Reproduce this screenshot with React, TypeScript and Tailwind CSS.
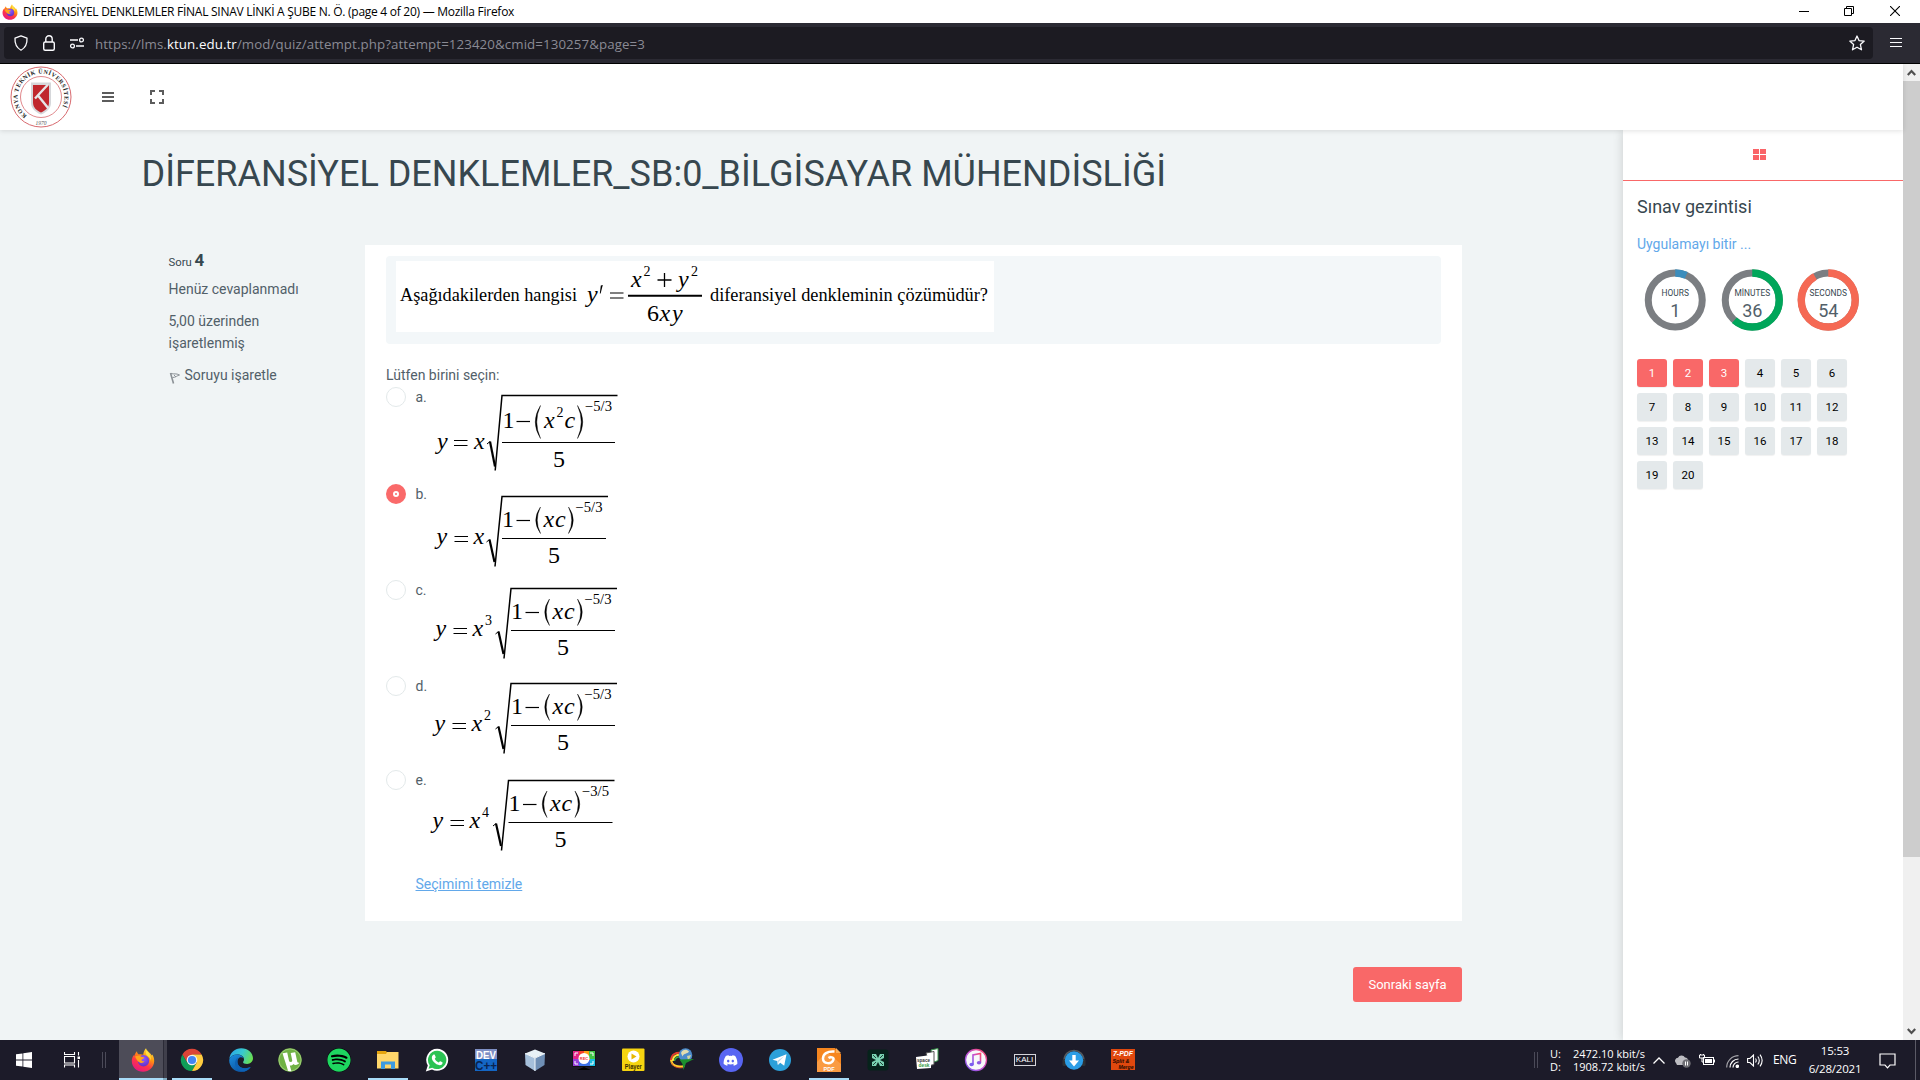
import React from "react";
import { FaSpotify, FaDiscord } from "react-icons/fa";

const SERIF = "'Liberation Serif', serif";

type GlyphProps = { x: number; y: number; size?: number; italic?: boolean; w?: number; children: React.ReactNode };

function G({ x, y, size = 24, italic, w, children }: GlyphProps) {
  return (
    <text
      x={x}
      y={y}
      fontFamily={SERIF}
      fontSize={size}
      fontStyle={italic ? "italic" : "normal"}
      fill="#000"
      textLength={w}
      lengthAdjust="spacingAndGlyphs"
    >
      {children}
    </text>
  );
}

function FirefoxIcon({ className }: { className: string }) {
  return (
    <svg viewBox="0 0 24 24" className={className}>
      <defs>
        <linearGradient id="ffBody" x1="0.8" y1="0" x2="0.25" y2="1">
          <stop offset="0" stopColor="#fff44f" />
          <stop offset="0.35" stopColor="#ff980e" />
          <stop offset="0.65" stopColor="#ff3647" />
          <stop offset="1" stopColor="#e31587" />
        </linearGradient>
        <radialGradient id="ffGlobe" cx="0.5" cy="0.3" r="0.8">
          <stop offset="0" stopColor="#9059ff" />
          <stop offset="1" stopColor="#5b2bbd" />
        </radialGradient>
      </defs>
      <path d="M15 0.3c.6 2.2 2.200 3 4 5 .7.6 1.300 1.300 1.700 2.200l.5-.9c1.500 2 2.100 4.500 2 6.900-.3 5.800-5.200 10.200-11.200 10.200C5.800 23.700.8 19.200.8 13c0-2.500.8-4.500 2-6l.2 1.300C4 6.300 4.500 4.500 6 3.300c0 1.700.8 2.500 1.800 3.100 1.500-.4 3.200-.2 4.400.4C12.300 4.500 13.600 1.800 15 .3z" fill="url(#ffBody)" />
      <circle cx="12.500" cy="12.800" r="5.700" fill="url(#ffGlobe)" />
      <path d="M4 8.500c2-1.200 5-1 6.800.4l2.500.3c-.2 1.400-2 1.500-2.700 2.600-.3 1.300 1.300 1.700 2.900 1.500-.9 1.400-2.700 1.900-4.300 1.400C6.700 13.900 5.500 11.400 4 8.500z" fill="#ffa31a" />
      <path d="M15.500 2.500c2.500 2.500 5 6 4.400 10.500-.3-2.400-1.500-4-3.400-5.100-1.700-1.300-2.100-3.200-1-5.400z" fill="#ffe847" opacity=".85" />
    </svg>
  );
}

function Seal() {
  return (
    <svg viewBox="-31 -31 62 62" className="h-[62px] w-[62px]">
      <defs>
        <path id="sealRing" d="M-14 18.700A23.400 23.400 0 1 1 14.500 18.300" />
      </defs>
      <circle r="30" fill="#fff" stroke="#d8696e" strokeWidth="1" />
      <circle r="20.500" fill="none" stroke="#d8696e" strokeWidth=".8" />
      <text fontFamily={SERIF} fontSize="6" fontWeight="bold" fill="#222" letterSpacing=".55">
        <textPath href="#sealRing">KONYA TEKNİK ÜNİVERSİTESİ</textPath>
      </text>
      <path d="M-10-14.500H10V6C10 11 5.500 15.500 0 17.500-5.500 15.500-10 11-10 6z" fill="#d6d7da" />
      <path d="M-8-12H8V5.500C8 10.500 4.500 13.500 0 15.500-4.500 13.500-8 10.500-8 5.500z" fill="#c0272d" />
      <path d="M7-12.500L-6 1.500M-3-1.500L7.500 11.500" stroke="#e6e6e8" strokeWidth="2.400" fill="none" />
      <text x="0" y="27.500" fontFamily={SERIF} fontSize="5.500" fontStyle="italic" textAnchor="middle" fill="#555">1970</text>
    </svg>
  );
}

function TitleBar() {
  return (
    <div className="flex h-[23px] shrink-0 items-center bg-white pl-[2px]">
      <FirefoxIcon className="h-4 w-4" />
      <span className="ml-[5px] whitespace-nowrap font-['Open_Sans',sans-serif] text-[12px] tracking-[-0.27px] text-black">
        DİFERANSİYEL DENKLEMLER FİNAL SINAV LİNKİ A ŞUBE N. Ö. (page 4 of 20) — Mozilla Firefox
      </span>
      <div className="ml-auto flex items-center pr-[20px]">
        <svg className="h-[11px] w-[10px]" viewBox="0 0 10 11"><path d="M0 5.500h10" stroke="#000" /></svg>
        <svg className="ml-[35px] mt-[-2px] h-[10px] w-[10px]" viewBox="0 0 10 10" fill="none" stroke="#000">
          <path d="M.5 2.500h7v7h-7zM2.500 2.500v-2h7v7h-2" />
        </svg>
        <svg className="ml-[36px] mt-[-2px] h-[10px] w-[10px]" viewBox="0 0 10 10"><path d="M0 0l10 10M10 0L0 10" stroke="#000" strokeWidth="1.100" /></svg>
      </div>
    </div>
  );
}

function UrlBar() {
  return (
    <div className="flex h-[41px] shrink-0 items-center border-b border-black bg-[#2b2a33] pl-1">
      <div className="flex h-8 w-[1869px] items-center rounded bg-[#1c1b22] pl-[9px]">
        <svg className="h-4 w-4" viewBox="0 0 16 16" fill="none" stroke="#fbfbfe" strokeWidth="1.300">
          <path d="M8 .8l6 2.300c.3 5-1.500 9.600-6 12.100C3.500 12.700 1.700 8.100 2 3.100z" strokeLinejoin="round" />
        </svg>
        <svg className="ml-3 h-4 w-4" viewBox="0 0 16 16" fill="none" stroke="#fbfbfe" strokeWidth="1.400">
          <rect x="2.700" y="7" width="10.600" height="8.200" rx="1.500" /><path d="M4.800 7V4a3.200 3.200 0 0 1 6.400 0v3" />
        </svg>
        <svg className="ml-3 h-4 w-4" viewBox="0 0 16 16" fill="none" stroke="#fbfbfe" strokeWidth="1.300">
          <path d="M1 5h8M7 11h8" /><circle cx="12.500" cy="5" r="1.900" /><circle cx="3.500" cy="11" r="1.900" />
        </svg>
        <span className="ml-[10px] mt-[3px] whitespace-nowrap font-['Open_Sans',sans-serif] text-[13.300px] tracking-[0.09px] text-[#8a8a94]">
          https://lms.<span className="text-[#fbfbfe]">ktun.edu.tr</span>/mod/quiz/attempt.php?attempt=123420&amp;cmid=130257&amp;page=3
        </span>
        <svg className="ml-auto mr-2 h-4 w-4" viewBox="0 0 16 16" fill="none" stroke="#fbfbfe" strokeWidth="1.300" strokeLinejoin="round">
          <path d="M8 1l2 4.600 5.200.5-3.800 3.500 1.100 5.200L8 12.200l-4.500 2.600 1.100-5.200L.8 6.100 6 5.600z" />
        </svg>
      </div>
      <svg className="ml-[17px] h-[12px] w-[12px]" viewBox="0 0 12 12"><path d="M0 1.500h12M0 5.500h12M0 9.500h12" stroke="#fbfbfe" /></svg>
    </div>
  );
}

function PageHeader() {
  return (
    <header className="relative z-10 flex h-[66px] shrink-0 items-center bg-white pl-[10px] shadow-[0_1px_5px_rgba(0,0,0,0.12)]">
      <Seal />
      <svg className="ml-[30px] h-[10px] w-[12px]" viewBox="0 0 12 10"><path d="M0 1h12M0 5h12M0 9h12" stroke="#5c5c5c" strokeWidth="2" /></svg>
      <svg className="ml-[36px] h-[14px] w-[14px]" viewBox="0 0 14 14" fill="none" stroke="#5c5c5c" strokeWidth="2">
        <path d="M1 5V1h4M9 1h4v4M13 9v4H9M5 13H1V9" />
      </svg>
    </header>
  );
}

function QuestionFormula() {
  return (
    <svg viewBox="396 261 598 71" className="h-[71px] w-[598px] bg-white">
      <G x={400} y={301} size={18.5} w={177}>Aşağıdakilerden hangisi</G>
      <G x={587} y={301.500} italic>y</G>
      <path d="M600.800 285.500l2-.6-2.200 8.500h-.8z" fill="#000" />
      <path d="M610 293h13.500M610 298h13.500" stroke="#000" strokeWidth="1.200" />
      <G x={631} y={286.500} italic>x</G>
      <G x={643.5} y={275.500} size={14}>2</G>
      <path d="M657.500 280h14M664.500 273v14" stroke="#000" strokeWidth="1.300" />
      <G x={678} y={286.500} italic>y</G>
      <G x={691} y={275.500} size={14}>2</G>
      <path d="M628 295.800h74" stroke="#000" strokeWidth="2" />
      <G x={647} y={321}>6</G>
      <G x={659.5} y={321} italic>x</G>
      <G x={672} y={321} italic>y</G>
      <G x={710} y={301} size={18.5} w={278}>diferansiyel denkleminin çözümüdür?</G>
    </svg>
  );
}

type Answer = {
  letter: string;
  row: string;
  dx: number;
  dy: number;
  yx: number;
  power?: string;
  exp: string;
  checked?: boolean;
};

const ANSWERS: Answer[] = [
  { letter: "b.", row: "h-[96px]", dx: 0, dy: 0, yx: 436.500, exp: "−5/3", checked: true },
  { letter: "c.", row: "h-[96px]", dx: 9, dy: -4, yx: 435.500, power: "3", exp: "−5/3" },
  { letter: "d.", row: "h-[94px]", dx: 9, dy: -5, yx: 434.500, power: "2", exp: "−5/3" },
  { letter: "e.", row: "h-[92px]", dx: 6.500, dy: -2, yx: 432.500, power: "4", exp: "−3/5" },
];

function FormulaA() {
  return (
    <svg viewBox="430 387 200 90" className="h-[90px] w-[200px]">
      <G x={437} y={448.500} italic>y</G>
      <path d="M454 440.500h13.500M454 445.500h13.500" stroke="#000" strokeWidth="1.200" />
      <G x={474} y={448.500} italic>x</G>
      <path d="M487 444l3-2.500" stroke="#000" fill="none" />
      <path d="M490 441.500l5 25" stroke="#000" strokeWidth="2.200" fill="none" />
      <path d="M495.200 470.500L502 395.500H617.500" stroke="#000" strokeWidth="1.500" fill="none" />
      <path d="M502 442.500h113" stroke="#000" strokeWidth="1.200" />
      <G x={502.500} y={428}>1</G>
      <path d="M516.500 421.500h13.500" stroke="#000" strokeWidth="1.200" />
      <path d="M540.500 405.500q-10.500 16.500 0 33q-7.500-16.500 0-33z" fill="#000" stroke="#000" strokeWidth=".4" />
      <G x={544} y={428} italic>x</G>
      <G x={556.500} y={417} size={14}>2</G>
      <G x={564.500} y={428} italic>c</G>
      <path d="M577.500 405.500q10.500 16.500 0 33q7.500-16.500 0-33z" fill="#000" stroke="#000" strokeWidth=".4" />
      <G x={585} y={411} size={14} w={27}>−5/3</G>
      <G x={553} y={467}>5</G>
    </svg>
  );
}

function Formula({ dx, dy, yx, power, exp }: Answer) {
  return (
    <svg viewBox="430 484 200 90" className="h-[90px] w-[200px]">
      <g transform={`translate(0 ${dy})`}>
        <G x={yx} y={544} italic>y</G>
        <path d={`M${yx + 18} 536.500h13.500M${yx + 18} 541.500h13.500`} stroke="#000" strokeWidth="1.200" />
        <G x={yx + 37} y={544} italic>x</G>
        {power && <G x={yx + 49.500} y={533} size={14}>{power}</G>}
      </g>
      <g transform={`translate(${dx} ${dy})`}>
        <path d="M486.500 542l3-2.500" stroke="#000" fill="none" />
        <path d="M489.500 539.500l5 22.500" stroke="#000" strokeWidth="2.200" fill="none" />
        <path d="M495 566.500L502 496.500H608" stroke="#000" strokeWidth="1.500" fill="none" />
        <path d="M502 538.500h104" stroke="#000" strokeWidth="1.200" />
        <G x={502} y={526.500}>1</G>
        <path d="M516.500 520.500h13.500" stroke="#000" strokeWidth="1.200" />
        <path d="M540.500 507q-9.500 13.200 0 26.500q-6.500-13.300 0-26.500z" fill="#000" stroke="#000" strokeWidth=".4" />
        <G x={543.500} y={526.500} italic>x</G>
        <G x={555} y={526.500} italic>c</G>
        <path d="M568.500 507q9.500 13.200 0 26.500q6.500-13.300 0-26.500z" fill="#000" stroke="#000" strokeWidth=".4" />
        <G x={575.500} y={512} size={14} w={27}>{exp}</G>
        <G x={548} y={563}>5</G>
      </g>
    </svg>
  );
}

function Radio({ checked }: { checked?: boolean }) {
  return checked ? (
    <span className="flex h-5 w-5 items-center justify-center rounded-full bg-[#fa6a6a]">
      <span className="h-[6px] w-[6px] rounded-full border-2 border-white bg-[#fa6a6a]" />
    </span>
  ) : (
    <span className="h-5 w-5 rounded-full border border-[#e3e9ea] bg-white" />
  );
}

function AnswerRow({ letter, row, checked, children }: { letter: string; row: string; checked?: boolean; children: React.ReactNode }) {
  return (
    <div className={`flex items-start ${row}`}>
      <Radio checked={checked} />
      <span className="ml-[9.500px] w-[14.500px] text-[14px] leading-5">{letter}</span>
      {children}
    </div>
  );
}

function Dial({ label, value, color, fraction }: { label: string; value: string; color: string; fraction: number }) {
  const len = 2 * Math.PI * 27;
  return (
    <svg viewBox="-38.250 -31 76.500 62" className="h-[62px] w-[76.500px]">
      <circle r="27" fill="none" stroke="#7b7e82" strokeWidth="7" />
      <circle r="27" fill="none" stroke={color} strokeWidth="7.400" strokeDasharray={`${len * fraction} ${len}`} transform="rotate(-90)" />
      <text x="0" y="-4" textAnchor="middle" fontFamily="Roboto, sans-serif" fontSize="8.400" fill="#37474f">{label}</text>
      <text x="0" y="17" textAnchor="middle" fontFamily="Roboto, sans-serif" fontSize="18" fill="#526069">{value}</text>
    </svg>
  );
}

function QuizSidebar() {
  return (
    <aside className="w-[280px] shrink-0 bg-white shadow-[0_0_10px_rgba(0,0,0,0.16)]">
      <div className="flex h-[51px] items-center justify-center border-b border-[#f96868] pb-[1px]">
        <svg className="mr-[7px] mb-[1px] h-[11px] w-[13px]" viewBox="0 0 13 11" fill="#fa6468">
          <rect width="6" height="5" /><rect x="7" width="6" height="5" /><rect y="6" width="6" height="5" /><rect x="7" y="6" width="6" height="5" />
        </svg>
      </div>
      <div className="px-[14px]">
        <h2 className="mt-[14px] text-[18px] leading-6 text-[#37474f]">Sınav gezintisi</h2>
        <p className="mt-[14px] text-[14px] leading-[22px] text-[#62a8ea]">Uygulamayı bitir ...</p>
        <div className="mt-[14px] flex">
          <Dial label="HOURS" value="1" color="#3c8dbc" fraction={0.066} />
          <Dial label="MİNUTES" value="36" color="#00a65a" fraction={0.613} />
          <Dial label="SECONDS" value="54" color="#f56954" fraction={0.915} />
        </div>
        <div className="mt-[28px] grid w-[210px] grid-cols-6 gap-[6px]">
          {Array.from({ length: 20 }, (_, i) => (
            <div
              key={i}
              className={`flex h-7 items-center justify-center rounded-[3px] pt-px text-[11.500px] shadow-[0_1px_1px_rgba(0,0,0,0.06)] ${i < 3 ? "bg-[#f96868] text-white" : "bg-[#e4e9eb] text-black"}`}
            >
              {i + 1}
            </div>
          ))}
        </div>
      </div>
    </aside>
  );
}

function Scrollbar() {
  return (
    <div className="flex w-[17px] shrink-0 flex-col bg-[#f0f0f0]">
      <div className="flex h-[17px] items-center justify-center">
        <svg className="h-[7px] w-[9px]" viewBox="0 0 9 7"><path d="M.8 6L4.500 2l3.700 4" fill="none" stroke="#505050" strokeWidth="2.200" /></svg>
      </div>
      <div className="h-[776px] bg-[#cdcdcd]" />
      <div className="mt-auto flex h-[17px] items-center justify-center">
        <svg className="h-[7px] w-[9px]" viewBox="0 0 9 7"><path d="M.8 1L4.500 5l3.700-4" fill="none" stroke="#505050" strokeWidth="2.200" /></svg>
      </div>
    </div>
  );
}

function IconArt({ name }: { name: string }) {
  const box = "h-6 w-6";
  switch (name) {
    case "firefox":
      return <FirefoxIcon className={box} />;
    case "chrome":
      return (
        <svg viewBox="-12 -12 24 24" className={box}>
          <path d="M-9.600-5.600A11.100 11.100 0 0 1 9.600-5.600L0-5.200-5 2.600z" fill="#db4437" />
          <path d="M-9.600-5.600A11.100 11.100 0 0 0 0 11.100L4.800 2.500-4.800 2.600z" fill="#0f9d58" />
          <path d="M9.600-5.600A11.100 11.100 0 0 1 0 11.100L4.800 2.500 0-5.400z" fill="#ffcd40" />
          <circle r="5.300" fill="#f4f4f4" /><circle r="4.100" fill="#4285f4" />
        </svg>
      );
    case "edge":
      return (
        <svg viewBox="0 0 24 24" className={box}>
          <defs>
            <linearGradient id="edTop" x1="0" y1=".3" x2="1" y2=".6"><stop offset="0" stopColor="#2aa8e8" /><stop offset=".5" stopColor="#38c8d0" /><stop offset="1" stopColor="#6be04c" /></linearGradient>
            <linearGradient id="edLow" x1="0" y1="0" x2=".7" y2="1"><stop offset="0" stopColor="#1b8fe0" /><stop offset="1" stopColor="#0b4f9c" /></linearGradient>
          </defs>
          <path d="M.3 11C1 4.500 6 .2 12.200.2 19 .2 24 5 24 10.300c0 3.300-2.700 5.600-5.800 5.600-2.700 0-4.400-1-4.100-2 .6-.9.9-1.500.9-2.600C15 8.500 11.800 6.500 8.300 6.500 4.500 6.500 1.500 8.500.3 11z" fill="url(#edTop)" />
          <path d="M.2 12C.8 8.600 4.400 6.400 8.200 6.400c3.200 0 6 1.700 6.600 4.200-1-1-2.100-1.400-3.300-1.300-2.400.3-3.700 3.700-2.700 6.600 1.300 4.100 7.200 5.700 12.900 3.100-2.100 3.200-5.600 5-9.700 5C5.500 24 0 18.500.2 12z" fill="url(#edLow)" />
          <path d="M9 9.700c-3.300 2-4 6.700-1.500 10 2 2.800 5.300 4 8 3.800 2.500-.6 4.700-2.100 6.200-4.400-5.500 2.400-11.600.9-12.900-3.200-.8-2.300-.4-4.700.2-6.200z" fill="#0d62b5" />
        </svg>
      );
    case "utorrent":
      return (
        <svg viewBox="0 0 24 24" className={box}>
          <circle cx="12" cy="12" r="11.700" fill="#70b244" /><circle cx="12" cy="12" r="11" fill="none" stroke="#9ccb76" strokeWidth="1" />
          <path d="M4.500 5.200L9.200 4.500l1.800 8.300c.4 1.900 3.600 1.400 3.200-.6L12.700 5l4.500-.7 2 9.300c.2 1 1 1.400 2.200 1.100-.8 1.800-4.400 3.300-6 1.300-.9 1.200-2.300 1.700-3.600 1.500l1.600 5.800-3.300-.2z" fill="#fff" />
        </svg>
      );
    case "spotify":
      return <span className="flex h-6 w-6 rounded-full bg-black"><FaSpotify className="h-6 w-6 text-[#1ed760]" /></span>;
    case "explorer":
      return (
        <svg viewBox="0 0 24 24" className={box}>
          <path d="M1 3h9l1.500 2H22v3H1z" fill="#e5a50f" /><path d="M1 6h9l1-2h11.500v16.500H1z" fill="#ffd76b" />
          <path d="M5 21v-7.500h14V21h-4v-4.500H9V21z" fill="#3d9be0" />
        </svg>
      );
    case "whatsapp":
      return (
        <svg viewBox="0 0 24 24" className={box}>
          <path d="M12.200.8A11 11 0 1 1 7 21.500L.8 23.400l2-6A11 11 0 0 1 12.200.8z" fill="#fff" />
          <path d="M12.200 2.700A9.200 9.200 0 1 1 7.300 19.700l-3.800 1.100 1.200-3.600A9.200 9.200 0 0 1 12.200 2.700z" fill="#2bc353" />
          <path d="M8.300 6.800c.5-.4 1.200-.4 1.500.2l.9 2c.2.600-.7 1.300-.9 1.700.8 1.700 2.100 2.900 3.900 3.700.5-.3 1-1.500 1.600-1.200l2.100 1.100c.4.400 0 1.700-.5 2.200-2.400 2-6.300-.4-8.100-2.400C6.700 11.700 6 8.500 8.300 6.800z" fill="#fff" />
        </svg>
      );
    case "dev":
      return (
        <svg viewBox="0 0 24 24" className={box}>
          <rect x="1" y="1" width="22" height="11" fill="#7e8fc4" /><rect x="1" y="11" width="22" height="12" fill="#1466c4" />
          <text x="12" y="11" textAnchor="middle" fontSize="10" fontWeight="bold" fontFamily="Liberation Sans, sans-serif" fill="#fff" textLength="20" lengthAdjust="spacingAndGlyphs">DEV</text>
          <text x="12" y="22" textAnchor="middle" fontSize="12" fontWeight="bold" fontFamily="Liberation Sans, sans-serif" fill="#0a2450" textLength="22" lengthAdjust="spacingAndGlyphs">C++</text>
        </svg>
      );
    case "cube":
      return (
        <svg viewBox="0 0 24 24" className={box}>
          <path d="M12 1.500l10 4-10 4.500-10-4.500z" fill="#e8f1f6" /><path d="M2 5.500L12 10v13L2.500 17z" fill="#a6c0db" /><path d="M22 5.500L12 10v13l9.500-6z" fill="#6f8fb5" />
          <path d="M12 10v13M2 5.500L12 10l10-4.500" stroke="#f3f8fb" fill="none" />
        </svg>
      );
    case "rec":
      return (
        <svg viewBox="0 0 24 24" className={box}>
          <rect x=".5" y="2" width="23" height="17" fill="#111" /><path d="M5 22l7-3 7 3z" fill="#000" />
          <rect x="1" y="3" width="6" height="8" fill="#e02487" /><rect x="1" y="11" width="6" height="7" fill="#9640d8" /><rect x="7" y="3" width="5" height="15" fill="#f4402d" /><rect x="12" y="3" width="6" height="15" fill="#ff9d16" /><rect x="17" y="3" width="6" height="8" fill="#41c447" /><rect x="7" y="12" width="11" height="6" fill="#3e72e6" /><rect x="18" y="11" width="5" height="7" fill="#19bde0" />
          <path d="M3 8V5h3M18 5h3v3M21 13v3h-3M6 16H3v-3" stroke="#fff" fill="none" />
          <circle cx="12" cy="10.500" r="5.500" fill="#fff" />
          <text x="12" y="12" textAnchor="middle" fontSize="4" fontWeight="bold" fontFamily="Liberation Sans, sans-serif" fill="#f03030">REC</text>
        </svg>
      );
    case "player":
      return (
        <svg viewBox="0 0 24 24" className={box}>
          <rect x="1" y=".5" width="22.500" height="22.500" rx="1" fill="#f6d410" /><circle cx="12.500" cy="8.500" r="6" fill="#fff" /><path d="M10.500 5.500l5 3-5 3z" fill="#e8b800" />
          <text x="12.300" y="21" textAnchor="middle" fontSize="6.500" fontWeight="bold" fontFamily="Liberation Sans, sans-serif" fill="#3a2d00" textLength="17" lengthAdjust="spacingAndGlyphs">Player</text>
        </svg>
      );
    case "idm":
      return (
        <svg viewBox="0 0 24 24" className={box}>
          <path d="M1 13C1 6 6 4 12 5" stroke="#e23b2c" strokeWidth="2" fill="none" /><path d="M2.800 13C2.800 8 7 6 12 7" stroke="#ffe23a" strokeWidth="2" fill="none" /><path d="M4.500 13C4.500 10 8 8 12 9" stroke="#35a845" strokeWidth="1.500" fill="none" />
          <path d="M1.300 12c0 6 7 7.500 13 6" stroke="#ffcf2a" strokeWidth="2.200" fill="none" /><path d="M1.500 14.500c1 4.500 7 6 12 5" stroke="#e25b2c" strokeWidth="1" fill="none" />
          <circle cx="15.500" cy="7" r="6.800" fill="#4d8ccc" /><path d="M11 5c1.500-4 6-4 8-1.500-2 3-5 1-6.500 5z" fill="#e3ddb0" /><path d="M17 8l4-1-1 3-2 2z" fill="#cfd3a4" />
          <path d="M9.500 11.500L24 11l-8 4-2.500 7-1-6z" fill="#1c8f2d" />
        </svg>
      );
    case "discord":
      return <span className="flex h-6 w-6 items-center justify-center rounded-full bg-[#5865f2]"><FaDiscord className="h-[15px] w-[15px] text-white" /></span>;
    case "telegram":
      return (
        <svg viewBox="0 0 24 24" className={box}>
          <circle cx="12" cy="12" r="11" fill="#2ba0da" />
          <path d="M4.500 11.800L18.500 6.300l-2.300 11.500-4-3-2.300 2.200-.7-4z" fill="#fff" /><path d="M9.200 13l7-5-5.500 6-.8 3z" fill="#b9d8ea" />
        </svg>
      );
    case "foxit":
      return (
        <svg viewBox="0 0 24 24" className={box}>
          <path d="M0 0h18l6 6v18H0z" fill="#f6861f" /><path d="M0 14L10 4l14 12v8H0z" fill="#fa9b42" /><path d="M19 0v5h5z" fill="#fbb05d" />
          <path d="M17.500 3.500C10 3 6 6 6 10.500c0 5.500 8.500 6.500 10.500 1 .5-2-3-3-5-1.500" stroke="#fff" strokeWidth="2.400" fill="none" />
          <text x="12" y="23" textAnchor="middle" fontSize="5.500" fontWeight="bold" fontFamily="Liberation Sans, sans-serif" fill="#fff">PDF</text>
        </svg>
      );
    case "green":
      return (
        <svg viewBox="0 0 24 24" className={box}>
          <rect x="1.500" y="1.500" width="21" height="21" rx="3" fill="#06231b" />
          <path d="M6 6h4l2 4 2-4h4v4l-4 2 4 2v4h-4l-2-4-2 4H6v-4l4-2-4-2z" fill="#79d3b1" /><path d="M7 7l3 3M17 7l-3 3M7 17l3-3M17 17l-3-3" stroke="#06231b" strokeWidth=".8" />
        </svg>
      );
    case "spacedesk":
      return (
        <svg viewBox="0 0 24 24" className={box}>
          <path d="M16 2l7-1.500v12L19 14z" fill="#fff" stroke="#3f9b50" /><path d="M11 5l8-1.500v13l-4 1z" fill="#fff" stroke="#555" />
          <path d="M1 9l15-2v13L2 21z" fill="#fff" />
          <text x="8.500" y="14" textAnchor="middle" fontSize="5.500" fontWeight="bold" fontFamily="Liberation Sans, sans-serif" fill="#333" textLength="13" lengthAdjust="spacingAndGlyphs">space</text>
          <text x="9" y="19" textAnchor="middle" fontSize="5.500" fontWeight="bold" fontFamily="Liberation Sans, sans-serif" fill="#2f9b45" textLength="11" lengthAdjust="spacingAndGlyphs">desk</text>
        </svg>
      );
    case "itunes":
      return (
        <svg viewBox="0 0 24 24" className={box}>
          <defs><linearGradient id="itn" x1="0" y1="1" x2="1" y2="0"><stop offset="0" stopColor="#7a5cf0" /><stop offset=".5" stopColor="#c84fd0" /><stop offset="1" stopColor="#fb4a68" /></linearGradient></defs>
          <circle cx="12" cy="12" r="10.500" fill="#f8f8fa" stroke="url(#itn)" strokeWidth="1.300" />
          <path d="M9 16.500V7l7.500-1.500v9" stroke="url(#itn)" strokeWidth="1.600" fill="none" /><ellipse cx="7.600" cy="16.500" rx="2.200" ry="1.800" fill="#7c5df0" /><ellipse cx="15" cy="14.800" rx="2.200" ry="1.800" fill="#8e58e0" />
        </svg>
      );
    case "kali":
      return <span className="flex h-[12px] w-[22px] items-center justify-center border border-[#d4d4da] font-['Liberation_Sans',sans-serif] text-[8px] leading-none text-white">KALI</span>;
    case "download":
      return (
        <svg viewBox="0 0 24 24" className={box}>
          <path d="M2 13C2-1 22-1 22 13" stroke="#555a5e" strokeWidth="1.600" fill="none" /><rect x=".5" y="11" width="4" height="7" rx="1.500" fill="#2e3134" /><rect x="19.500" y="11" width="4" height="7" rx="1.500" fill="#2e3134" />
          <circle cx="12" cy="12.500" r="9.200" fill="#2b9de6" /><path d="M10.300 7h3.400v5.500H17l-5 6-5-6h3.300z" fill="#fff" />
        </svg>
      );
    default:
      return (
        <svg viewBox="0 0 24 24" className={box}>
          <rect y="1" width="24" height="21" fill="#e0480e" />
          <text x="12" y="7.500" textAnchor="middle" fontSize="6.800" fontWeight="bold" fontStyle="italic" fontFamily="Liberation Sans, sans-serif" fill="#fff" textLength="20" lengthAdjust="spacingAndGlyphs">7-PDF</text>
          <text x="10" y="14.500" textAnchor="middle" fontSize="5.800" fontWeight="bold" fontStyle="italic" fontFamily="Liberation Sans, sans-serif" fill="#260a00" textLength="17" lengthAdjust="spacingAndGlyphs">Split &amp;</text>
          <text x="15" y="20.500" textAnchor="middle" fontSize="5.800" fontWeight="bold" fontStyle="italic" fontFamily="Liberation Sans, sans-serif" fill="#260a00" textLength="15" lengthAdjust="spacingAndGlyphs">Merge</text>
        </svg>
      );
  }
}

const APPS = [
  "firefox", "chrome", "edge", "utorrent", "spotify", "explorer", "whatsapp", "dev", "cube", "rec", "player",
  "idm", "discord", "telegram", "foxit", "green", "spacedesk", "itunes", "kali", "download", "sevenpdf",
];
const RUNNING = ["chrome", "explorer", "foxit"];

function Taskbar() {
  return (
    <footer className="flex h-10 shrink-0 items-stretch bg-[#1c1b29] font-['Open_Sans',sans-serif] text-white">
      <div className="flex w-12 items-center justify-center">
        <svg className="h-4 w-4" viewBox="0 0 16 16" fill="#fff"><path d="M0 2.300L6.500 1.400v6.200H0zM7.300 1.300L16 0v7.600H7.300zM0 8.400h6.500v6.200L0 13.700zM7.300 8.400H16V16l-8.700-1.300z" /></svg>
      </div>
      <div className="flex w-12 items-center justify-center">
        <svg className="h-4 w-4" viewBox="0 0 16 16" fill="none" stroke="#fff" strokeWidth="1.100">
          <path d="M.5 0v2.500h10V0M.5 15.500V13h10v2.500M.5 4.500h10v6.500H.5zM14.500 0v3.500M14.500 8v7.500" /><rect x="13.500" y="4.500" width="2.500" height="2.500" fill="#fff" stroke="none" />
        </svg>
      </div>
      <div className="flex w-[23px] items-center pl-[6px]">
        <span className="h-4 w-[4px] border-x border-[#4b4a58]" />
      </div>
      {APPS.map((name, i) => (
        <div
          key={name}
          className={`flex flex-col items-center ${i === 0 ? "w-[48px] bg-[linear-gradient(to_right,#4d4c58_44px,#2c2b37_44px,#2c2b37_45px,#403f4b_45px)]" : "w-[49px]"}`}
        >
          <div className="flex h-[38px] items-center justify-center pt-[2px]">
            <IconArt name={name} />
          </div>
          {i === 0 && <span className="h-[2px] w-full bg-[linear-gradient(to_right,#a9dcf8_44px,#7fa9bf_44px)]" />}
          {RUNNING.includes(name) && <span className="h-[2px] w-10 bg-[#a9dcf8]" />}
        </div>
      ))}
      <div className="ml-auto flex items-center">
        <span className="h-4 w-[4px] border-x border-[#4b4a58]" />
        <div className="ml-[12px] grid w-[95px] grid-cols-[23px_1fr] text-[11px] leading-[13px]">
          <span>U:</span><span className="whitespace-nowrap">2472.10 kbit/s</span>
          <span>D:</span><span className="whitespace-nowrap">1908.72 kbit/s</span>
        </div>
        <svg className="ml-[8px] h-[7px] w-[12px]" viewBox="0 0 12 7"><path d="M.5 6.500L6 1l5.500 5.500" fill="none" stroke="#fff" strokeWidth="1.300" /></svg>
        <svg className="ml-[10px] mt-[2px] h-[14px] w-4" viewBox="0 0 16 14">
          <path d="M1 9a3 3 0 0 1 2-5.200A4 4 0 0 1 10 3.500a3 3 0 0 1 3 3.500l-4 4H2z" fill="#bdbdc2" /><circle cx="11.500" cy="9.500" r="4.200" fill="#6e6e74" /><path d="M10.500 7.500v4M12.500 7.500v4" stroke="#fff" />
        </svg>
        <svg className="ml-[8px] h-[12px] w-4" viewBox="0 0 16 12">
          <rect x="4.500" y="3.500" width="10" height="7" fill="none" stroke="#fff" /><rect x="6" y="5" width="7" height="4" fill="#fff" /><path d="M15.500 5.500v3M.5 1h5v3h-5zM1.500-1v2M4.500-1v2M3 4v4h2" stroke="#fff" fill="none" />
        </svg>
        <svg className="ml-[11px] mt-[3px] h-[13px] w-[13px]" viewBox="0 0 13 13" fill="none" stroke="#fff" strokeWidth="1.200">
          <path d="M.7 12.500A11.800 11.800 0 0 1 12.500.7" opacity=".6" /><path d="M4 12.500A8.500 8.500 0 0 1 12.500 4M7 12.500A5.500 5.500 0 0 1 12.500 7" /><circle cx="11.300" cy="11.300" r="1.200" fill="#fff" />
        </svg>
        <svg className="ml-[8px] h-[13px] w-4" viewBox="0 0 16 13" fill="none" stroke="#fff" strokeWidth="1.100">
          <path d="M.6 4.500h2.300L6.500 1v11L2.900 8.500H.6zM8.500 4.500q1.500 2 0 4M10.800 2.500q3 4 0 8M13 .7q4.300 5.800 0 11.600" />
        </svg>
        <span className="ml-[10px] w-[23px] text-[12px] tracking-[-0.300px]">ENG</span>
        <div className="ml-[12px] w-[54px] whitespace-nowrap pb-px text-center text-[11.500px] leading-[18px] tracking-[-0.200px]">
          <div>15:53</div>
          <div>6/28/2021</div>
        </div>
        <svg className="ml-[17px] h-[17px] w-[17px]" viewBox="0 0 17 17"><path d="M1 2h15v11h-5l-2.500 2.800L6 13H1z" fill="none" stroke="#fff" strokeWidth="1.200" /></svg>
        <span className="ml-[19px] mr-1 h-10 w-px bg-[#5b5a66]" />
      </div>
    </footer>
  );
}

export default function App() {
  return (
    <div className="flex h-[1080px] w-[1920px] flex-col overflow-hidden font-['Roboto',sans-serif] text-[#526069]">
      <TitleBar />
      <UrlBar />
      <div className="flex min-h-0 flex-1">
        <div className="flex min-w-0 flex-1 flex-col">
          <PageHeader />
          <div className="flex min-h-0 flex-1 bg-[#f0f4f5]">
            <main className="min-w-0 flex-1">
              <h1 className="ml-[141.500px] mt-[22px] whitespace-nowrap text-[36px] leading-[44px] text-[#37474f]">
                DİFERANSİYEL DENKLEMLER_SB:0_BİLGİSAYAR MÜHENDİSLİĞİ
              </h1>
              <div className="mt-[49px] flex">
                <div className="ml-[168.500px] w-[196.500px] text-[14px] leading-[22px]">
                  <h3 className="mt-[4px] text-[11.300px] text-[#37474f]">Soru <span className="text-[17px] font-bold">4</span></h3>
                  <p className="mt-[4px]">Henüz cevaplanmadı</p>
                  <p className="mt-[10px] w-[110px]">5,00 üzerinden işaretlenmiş</p>
                  <p className="mt-[10px] flex items-center">
                    <svg className="mr-[4px] mt-[5px] h-[12px] w-[12px]" viewBox="0 0 12 12" fill="none" stroke="#8b9196">
                      <path d="M1.500 1l3 10.500" strokeWidth="1.600" /><path d="M2 1.500c3 1 5-.5 8.500 1.500C8 3.500 7 5.500 3.500 5.500M5 3l2 2" />
                    </svg>
                    Soruyu işaretle
                  </p>
                </div>
                <section className="h-[676px] w-[1097px] bg-white px-[21px] pt-[11px]">
                  <div className="h-[88px] rounded bg-[#f3f7f9] pl-[10px] pt-[5px]">
                    <QuestionFormula />
                  </div>
                  <p className="mt-[20px] text-[14px] leading-[22px]">Lütfen birini seçin:</p>
                  <div className="mt-[1px]">
                    <AnswerRow letter="a." row="h-[97px]"><FormulaA /></AnswerRow>
                    {ANSWERS.map((a) => (
                      <AnswerRow key={a.letter} letter={a.letter} row={a.row} checked={a.checked}>
                        <Formula {...a} />
                      </AnswerRow>
                    ))}
                  </div>
                  <a className="ml-[29.500px] mt-[11px] block text-[14px] leading-[22px] text-[#62a8ea] underline">Seçimimi temizle</a>
                </section>
              </div>
              <div className="mt-[46px] flex w-[1462px] justify-end">
                <button className="h-[35px] w-[109px] rounded-[3px] bg-[#f96868] text-[13px] text-white">Sonraki sayfa</button>
              </div>
            </main>
            <QuizSidebar />
          </div>
        </div>
        <Scrollbar />
      </div>
      <Taskbar />
    </div>
  );
}
